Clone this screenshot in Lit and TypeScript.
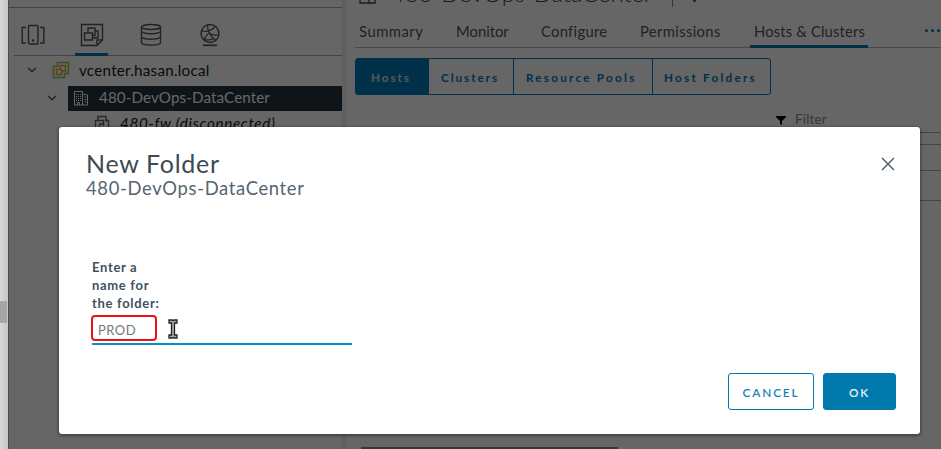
import { LitElement, html, css } from "lit";
import { customElement } from "lit/decorators.js";

@customElement("nav-tree")
class NavTree extends LitElement {
  static styles = css`
    :host { display: block; width: 333px; flex: none; background: #fff; color: #1a1a1a; }
    svg { fill: none; stroke: #555; stroke-width: 1.4; display: block; flex: none; }
    .top { height: 7px; border-bottom: 1px solid #a8a8a8; }
    .views { height: 47px; margin-left: 5px; border-bottom: 1px solid #a8a8a8; display: flex; }
    .view { width: 33px; height: 48px; padding-top: 15px; box-sizing: border-box; display: flex; justify-content: center; }
    .v1 { margin-left: 2px; }
    .v2 { margin-left: 26px; border-bottom: 3px solid #0079b8; }
    .v3 { margin-left: 26px; }
    .v4 { margin-left: 26px; }
    .row { height: 27px; display: flex; align-items: center; font-size: 15.2px; white-space: nowrap; }
    .r1 { height: 29px; padding-left: 18px; box-sizing: border-box; padding-bottom: 1px; }
    .r1 .glyph { margin: 0 9px 1px 15px; stroke: #8bc34a; }
    .r1 .inner { stroke: #e0a820; }
    .r2 { height: 26px; padding-left: 38px; }
    .r2 .sel { background: #25333d; color: #fff; height: 25px; margin-left: 11px; flex: 1; display: flex; align-items: center; }
    .r2 .glyph { stroke: #fff; stroke-width: 1; margin: 0 10px 1px 5px; }
    .r2 .t2 { padding-bottom: 2px; }
    .r3 { height: 24px; padding-left: 85px; font-style: italic; }
    .r3 .glyph { margin: 0 10px 1px 0; stroke: #666; }
    .chev { stroke: #555; stroke-width: 1.3; }
    .t1 { letter-spacing: 0.25px; }
    .t2 { letter-spacing: 0.1px; }
    .t3 { letter-spacing: 0.68px; }
  `;
  render() {
    const chevron = html`<svg class="chev" width="10" height="8" viewBox="0 0 10 8"><path d="M1.200 2l3.800 3.800L8.800 2" /></svg>`;
    return html`
      <div class="top"></div>
      <div class="views">
        <div class="view v1"><svg width="24" height="24" viewBox="0 0 24 24"><rect x="7.500" y="2.500" width="9.500" height="18.500" rx="1" /><path d="M5 4.500H1.200v15.500H5M19 4.500h3.800v15.500H19" /><circle cx="12" cy="17.500" r=".6" fill="#555" /></svg></div>
        <div class="view v2"><svg width="24" height="24" viewBox="0 0 24 24"><path d="M1.500 1.500h21V17L17 22.500H1.500zM17 22v-5h5.500" /><path d="M8 10V5h7v7.500h-2.500M4.500 10h8v7h-8zM15 8h3v7h-5.500" /></svg></div>
        <div class="view v3"><svg width="24" height="24" viewBox="0 0 24 24"><ellipse cx="12" cy="4" rx="9.500" ry="2.500" /><path d="M2.500 4v15.500c0 3.500 19 3.500 19 0V4M3.500 9c2 2.300 15 2.300 17 0M3.500 14.500c2 2.300 15 2.300 17 0" /></svg></div>
        <div class="view v4"><svg width="24" height="24" viewBox="0 0 24 24"><circle cx="12" cy="10.500" r="9" /><path stroke-width="1.200" d="M9.500 2C9 8 13 14 17.500 17M3.500 8C8 9 13 8 17 3.500M11 9.500L5.500 16.500M12 10.500c3 2 6 2 9 1M6 16.500c4 1 8 0 10-1" /><circle cx="6.500" cy="16" r="1.200" fill="#555" stroke="none" /><path stroke-width="1.700" d="M5 22.300h14" /></svg></div>
      </div>
      <div class="row r1">${chevron}
        <svg class="glyph" width="18" height="18" viewBox="0 0 18 18"><path stroke-width="1.500" d="M1.500 5.500H5.500V1.500h11v11H12.500v4H1.500z" /><path class="inner" d="M4.500 8.500h5v5h-5zM8 8.500V4.500h5.500V10H9.500" /></svg>
        <span class="t1">vcenter.hasan.local</span></div>
      <div class="row r2">${chevron}
        <div class="sel"><svg class="glyph" width="16" height="16" viewBox="0 0 16 16"><path d="M1.500 15V1.500h8V15M9.500 4l5 1v10H1M11.500 7h2M11.500 9.500h2M11.500 12h2" /><path stroke-dasharray="1 1" d="M3 4.500h5M3 6.500h5M3 8.500h5M3 10.500h5" /><path d="M4.500 15v-2.500h2V15" /></svg>
        <span class="t2">480-DevOps-DataCenter</span></div></div>
      <div class="row r3"><svg class="glyph" width="16" height="16" viewBox="0 0 16 16"><path d="M4 5V1.500h8V5M1.500 15V5.500h8V11M5 9h4M5.500 13V9M11 5.500h3.500v9H5" /></svg>
        <span class="t3">480-fw (disconnected)</span></div>`;
  }
}

@customElement("host-panel")
class HostPanel extends LitElement {
  static styles = css`
    :host { display: flex; flex-direction: column; flex: 1; min-width: 0; overflow: hidden; background: #fff; padding-left: 9px; color: #555; }
    .head { height: 7px; display: flex; align-items: flex-end; padding-left: 4px; overflow: hidden; white-space: nowrap; }
    .head svg { fill: none; stroke: #444; stroke-width: 1.3; margin-bottom: 3px; flex: none; }
    .title { font-size: 24px; line-height: 24px; margin: 0 0 2px 15px; width: 281px; flex: none; letter-spacing: -0.120px; font-weight: 300; color: #444; }
    .bar { width: 1px; height: 7px; background: #888; }
    .act { margin: 0 0 5px 20px; width: 3px; height: 2px; background: #0079b8; border-radius: 0 0 2px 2px; }
    .tabs { height: 40px; border-bottom: 1px solid #b8b8b8; display: flex; white-space: nowrap; font-size: 14.800px; line-height: 48px; letter-spacing: 0.28px; }
    .tab { flex: none; height: 41px; box-sizing: border-box; padding-left: 4px; }
    .a { width: 97px; letter-spacing: 0.5px; } .b { width: 85px; letter-spacing: 0; } .c { width: 99px; } .d { width: 114px; letter-spacing: 0.35px; }
    .e { width: 118px; border-bottom: 3px solid #0079b8; letter-spacing: 0.150px; }
    .dots { margin: 22px 0 0 57px; display: flex; gap: 3px; }
    .dots i { width: 3px; height: 3px; border-radius: 2px; background: #0079b8; }
    .group { margin-top: 10px; width: 416px; height: 37px; box-sizing: border-box; border: 1px solid #0079b8; border-radius: 3px; display: flex; font-size: 11.700px; font-weight: 700; letter-spacing: 2.250px; color: #0079b8; line-height: 37px; white-space: nowrap; }
    .btn { box-sizing: border-box; border-right: 1px solid #0079b8; flex: none; padding-left: 12px; }
    .on { background: #0079b8; color: #ddd; width: 73px; padding-left: 15px; letter-spacing: 1.950px; }
    .g2 { width: 85px; letter-spacing: 1.950px; } .g3 { width: 139px; } .g4 { width: 117px; border: 0; padding-left: 11px; }
    .filter { height: 37px; display: flex; align-items: flex-end; padding-left: 421px; font-size: 13.400px; color: #888; box-sizing: border-box; padding-bottom: 5px; }
    .filter span { line-height: 16px; letter-spacing: 0.2px; }
    .filter svg { margin: 0 9px 2px 0; }
    .table div { border-top: 1px solid #aaa; }
    .l1 { height: 11px; } .l2 { height: 25px; } .l3 { height: 29px; } .l4 { height: 10px; }
    .scroll { width: 257px; height: 2px; margin: auto 0 0 6px; background: #8a8a8a; }
  `;
  render() {
    return html`
      <div class="head">
        <svg width="17" height="17" viewBox="0 0 17 17"><path d="M1 1h15v15H1zM10 1v15M1 12h9" /></svg>
        <span class="title">480-DevOps-DataCenter</span><span class="bar"></span><span class="act"></span>
      </div>
      <div class="tabs">
        <span class="tab a">Summary</span><span class="tab b">Monitor</span><span class="tab c">Configure</span>
        <span class="tab d">Permissions</span><span class="tab e">Hosts &amp; Clusters</span>
        <span class="dots"><i></i><i></i><i></i></span>
      </div>
      <div class="group"><span class="btn on">Hosts</span><span class="btn g2">Clusters</span><span class="btn g3">Resource Pools</span><span class="btn g4">Host Folders</span></div>
      <div class="filter"><svg width="10" height="9" viewBox="0 0 10 9"><path d="M0 0h10v1L6 5v4L4 8V5L0 1z" /></svg><span>Filter</span></div>
      <div class="table"><div class="l1"></div><div class="l2"></div><div class="l3"></div><div class="l4"></div></div>
      <div class="scroll"></div>`;
  }
}

@customElement("folder-dialog")
class FolderDialog extends LitElement {
  static styles = css`
    :host { box-sizing: border-box; width: 861px; height: 307px; background: #fff; border-radius: 3px; box-shadow: 0 1px 3px 1px rgba(0,0,0,.35); padding: 22px 25px 24px 27px; display: flex; flex-direction: column; color: #25333d; }
    header { display: flex; justify-content: space-between; }
    h1 { margin: 0; font-size: 25px; line-height: 29px; font-weight: 400; letter-spacing: 0.70px; color: #3b4a55; }
    .sub { font-size: 18.400px; line-height: 20px; color: #566570; letter-spacing: 0.67px; }
    .close { margin: 8px 0 0 0; }
    .form { margin: 60px 0 0 6px; width: 260px; }
    label { display: block; width: 80px; font-size: 13px; line-height: 18.200px; font-weight: 700; color: #40515d; white-space: nowrap; letter-spacing: 0.68px; }
    .field { height: 31px; margin-top: 1px; box-sizing: border-box; border-bottom: 2px solid #0094cf; display: flex; align-items: flex-start; }
    .mark { box-sizing: border-box; width: 66px; height: 26px; margin: 1px 0 0 -1px; border: 2px solid #ed1018; border-radius: 4px; padding-left: 5px; line-height: 26px; font-size: 13px; letter-spacing: 0.5px; color: #777; }
    .cursor { margin: 5px 0 0 11px; }
    footer { margin-top: auto; display: flex; justify-content: flex-end; gap: 9px; }
    button { font: 600 11.800px/38px var(--ui); letter-spacing: 1.900px; padding: 0; box-sizing: border-box; height: 37px; border: 1px solid #0079ad; border-radius: 3px; background: #fff; color: #1683b2; }
    .cancel { width: 86px; } .ok { width: 73px; background: #0079ad; color: #e6f3f9; }
    footer { margin-right: -1px; }
  `;
  render() {
    return html`
      <header>
        <div><h1>New Folder</h1><div class="sub">480-DevOps-DataCenter</div></div>
        <svg class="close" width="14" height="14" viewBox="0 0 14 14" fill="none" stroke="#51636e" stroke-width="1.5"><path d="M1 1l12 12M13 1L1 13" /></svg>
      </header>
      <div class="form">
        <label>Enter a<br />name for<br />the folder:</label>
        <div class="field"><div class="mark">PROD</div>
          <svg class="cursor" width="10" height="20" viewBox="0 0 10 20"><path d="M1 1h3l1 .6L6 1h3v3H6.500v12H9v3H6l-1-.6-1 .6H1v-3h2.500V4H1z" fill="#aaa" stroke="#222" stroke-width="1.300" /></svg>
        </div>
      </div>
      <footer><button class="cancel">CANCEL</button><button class="ok">OK</button></footer>`;
  }
}

@customElement("app-root")
class AppRoot extends LitElement {
  static styles = css`
    :host { --ui: Lato, "Open Sans", sans-serif; display: flex; position: relative; width: 941px; height: 449px; overflow: hidden; font-family: var(--ui); background: #fff; }
    .gutter { width: 8px; flex: none; background: linear-gradient(90deg, #d8d8d8, #c6c6c6); display: flex; }
    .thumb { width: 7px; height: 22px; margin-top: 301px; background: #a6a6a6; }
    .edge { width: 1px; background: #c0c0c0; flex: none; }
    .split { width: 4px; background: #eee; flex: none; }
    .shade { position: absolute; inset: 0 0 0 8px; background: rgba(0,0,0,.6); }
    folder-dialog { position: absolute; left: 59px; top: 127px; }
  `;
  render() {
    return html`
      <div class="gutter"><div class="thumb"></div></div><div class="edge"></div>
      <nav-tree></nav-tree><div class="split"></div><host-panel></host-panel>
      <div class="shade"></div>
      <folder-dialog></folder-dialog>`;
  }
}
